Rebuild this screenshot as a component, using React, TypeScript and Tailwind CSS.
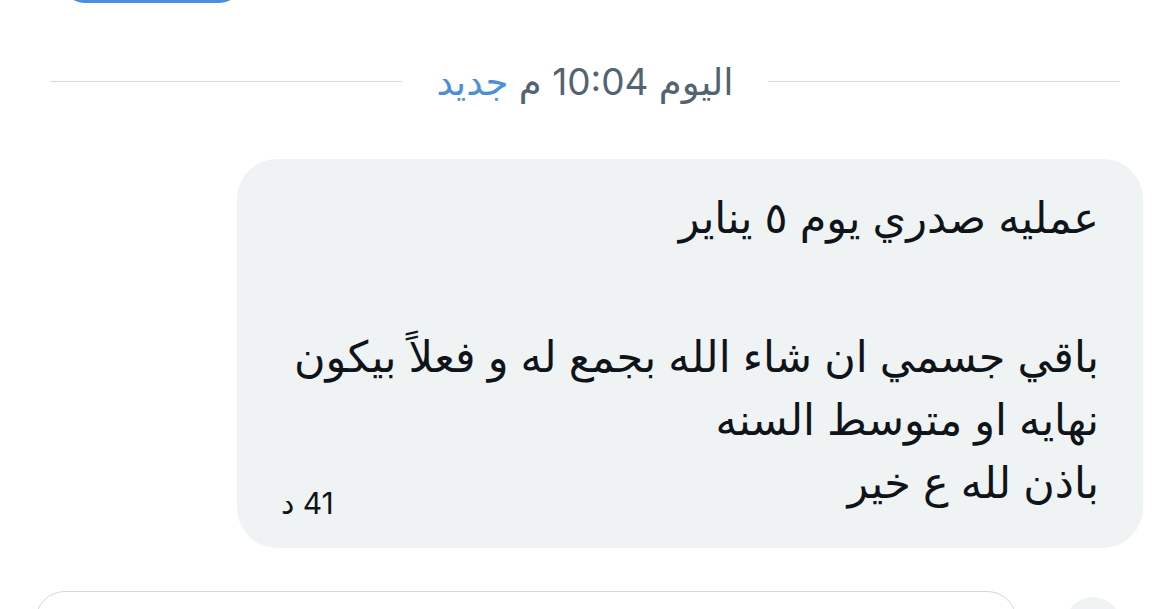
const arabic = "font-['Inter','DejaVu_Sans',sans-serif]";

const lines = [
  "عمليه صدري يوم ٥ يناير",
  "",
  "باقي جسمي ان شاء الله بجمع له و فعلاً بيكون",
  "نهايه او متوسط السنه",
  "باذن لله ع خير",
];

const App = () => {
  return (
    <div className={`w-[1170px] h-[609px] overflow-hidden bg-white flex flex-col ${arabic}`}>
      <div className="ml-[63px] -mt-[40px] h-[43px] w-[178px] rounded-full bg-[#4a90e2] shrink-0" />

      <div className="mt-[58px] flex items-center px-[50px] h-[40px] shrink-0">
        <div className="flex-1 h-px bg-[#cfd9de]" />
        <div dir="rtl" className="px-[34px] text-[37px] text-[#536471] whitespace-nowrap leading-none">
          اليوم 10:04 م <span className="text-[#4a90d9]">جديد</span>
        </div>
        <div className="flex-1 h-px bg-[#cfd9de]" />
      </div>

      <div
        dir="rtl"
        className="mt-[58px] ml-[237px] mr-[27px] h-[389px] shrink-0 rounded-[40px] bg-[#eff3f4] pt-[27px] pr-[44px] pl-[44px] pb-[34px] flex items-end justify-between"
      >
        <div className="min-w-0 text-[43px] text-[#0f1419] leading-[63px]">
          {lines.map((l, i) =>
            l ? (
              <div key={i} className="h-[63px] whitespace-nowrap">
                {l}
              </div>
            ) : (
              <div key={i} className="h-[76px]" />
            )
          )}
        </div>
        <div className="shrink-0 -mb-[4px] text-[30px] text-[#0f1419] leading-none whitespace-nowrap">41 د</div>
      </div>

      <div className="mt-[43px] flex items-start shrink-0">
        <div className="ml-[35px] w-[982px] h-[60px] rounded-[30px] border border-[#cfd9de] bg-white" />
        <div className="ml-[48px] mt-[6px] w-[56px] h-[56px] rounded-full bg-[#eff3f4]" />
      </div>
    </div>
  );
};

export default App;
